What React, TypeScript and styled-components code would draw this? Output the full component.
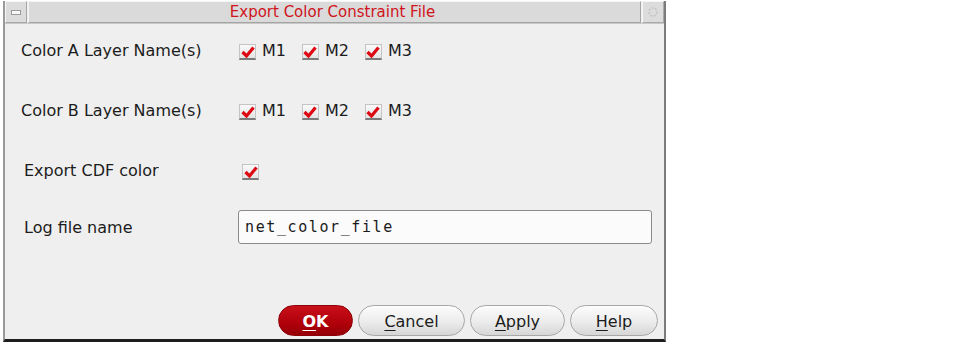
import React from 'react'
import styled, { createGlobalStyle } from 'styled-components'

const GlobalStyle = createGlobalStyle`
  html, body {
    margin: 0;
    padding: 0;
    background: #ffffff;
  }
  body {
    font-family: "DejaVu Sans", "Liberation Sans", sans-serif;
  }
`;

const Window = styled.div`
  margin: 1px 0 0 3px;
  width: 663px;
  height: 341px;
  box-sizing: border-box;
  border-left: 2px solid #9a9a9a;
  border-right: 2px solid #7c7c7c;
  border-bottom: 3px solid #1e1e1e;
  background: #efefef;
  display: flex;
  flex-direction: column;
`;

const TitleBar = styled.div`
  display: grid;
  grid-template-columns: 22px 1fr 22px;
  gap: 1px;
  height: 22px;
  border-bottom: 1px solid #c8c8c8;
`;

const TitleButton = styled.div`
  background: #dcdcdc;
  border: 1px solid #f6f6f6;
  border-right-color: #a8a8a8;
  border-bottom-color: #a8a8a8;
  display: flex;
  align-items: center;
  justify-content: center;
`;

const Title = styled.div`
  background: #dadada;
  border: 1px solid #f4f4f4;
  border-right-color: #a4a4a4;
  border-bottom-color: #a4a4a4;
  color: #d0141c;
  font-size: 15px;
  display: flex;
  align-items: center;
  justify-content: center;
  padding-right: 4px;
`;

const MinGlyph = styled.span`
  width: 8px;
  height: 3px;
  background: #f8f8f8;
  border: 1px solid #9a9a9a;
`;

const Body = styled.div`
  flex: 1;
  display: flex;
  flex-direction: column;
  padding: 0 0 0 16px;
`;

const Row = styled.div<{ $h: number; $indent?: number }>`
  height: ${p => p.$h}px;
  display: flex;
  align-items: center;
  padding-left: ${p => p.$indent || 0}px;
`;

const Label = styled.div<{ $w: number }>`
  width: ${p => p.$w}px;
  flex: none;
  font-size: 16px;
  color: #1c1c1c;
`;

const CheckGroup = styled.div`
  display: flex;
  align-items: center;
  gap: 16px;
`;

const CheckItem = styled.label`
  display: flex;
  align-items: center;
  gap: 6px;
  font-size: 16px;
  color: #1c1c1c;
`;

const Box = styled.span`
  width: 17px;
  height: 16px;
  margin-top: 4px;
  box-sizing: border-box;
  background: linear-gradient(#fafafa, #e4e4e4);
  border: 1px solid #c4c4c4;
  border-bottom: 2px solid #7a7a7a;
  display: flex;
  align-items: center;
  justify-content: center;
`;

const TextField = styled.div`
  width: 414px;
  height: 34px;
  box-sizing: border-box;
  border: 1px solid #8a8a8a;
  border-radius: 3px;
  background: #fbfbfb;
  display: flex;
  align-items: center;
  padding-left: 6px;
  font-family: "DejaVu Sans Mono", "Liberation Mono", monospace;
  font-size: 15px;
  letter-spacing: 1.6px;
  color: #1a1a1a;
`;

const ButtonBar = styled.div`
  margin-top: auto;
  display: flex;
  justify-content: flex-end;
  gap: 5px;
  padding: 0 6px 3px 0;
`;

const Button = styled.button<{ $w: number; $primary?: boolean }>`
  width: ${p => p.$w}px;
  height: 31px;
  border-radius: 16px;
  font-family: "DejaVu Sans", "Liberation Sans", sans-serif;
  font-size: 16px;
  font-weight: ${p => (p.$primary ? 'bold' : 'normal')};
  color: ${p => (p.$primary ? '#ffffff' : '#1c1c1c')};
  border: 1px solid ${p => (p.$primary ? '#8c0008' : '#a8a8a8')};
  background: ${p =>
    p.$primary
      ? 'linear-gradient(#c8101a, #b0000a 60%, #960008)'
      : 'linear-gradient(#fcfcfc, #ececec 55%, #d6d6d6)'};
  padding: 2px 0 0;
  u {
    text-decoration-thickness: 1px;
    text-underline-offset: 3px;
  }
`;

const Check = () => (
  <Box>
    <svg width="14" height="12" viewBox="0 0 14 12">
      <path d="M1.5 6 L5.5 10 L12.5 1.5" fill="none" stroke="#dd0a14" strokeWidth="3.2" strokeLinejoin="miter" />
    </svg>
  </Box>
);

const Layers = () => (
  <CheckGroup>
    {['M1', 'M2', 'M3'].map(l => (
      <CheckItem key={l}>
        <Check />
        {l}
      </CheckItem>
    ))}
  </CheckGroup>
);

const App = () => (
  <>
    <GlobalStyle />
    <Window>
      <TitleBar>
        <TitleButton><MinGlyph /></TitleButton>
        <Title>Export Color Constraint File</Title>
        <TitleButton>
          <svg width="12" height="12" viewBox="0 0 12 12">
            <circle cx="6" cy="6" r="4" fill="none" stroke="#c4c4c4" strokeWidth="1.5" strokeDasharray="2 1.4" />
          </svg>
        </TitleButton>
      </TitleBar>
      <Body>
        <Row $h={52}>
          <Label $w={218}>Color A Layer Name(s)</Label>
          <Layers />
        </Row>
        <Row $h={68}>
          <Label $w={218}>Color B Layer Name(s)</Label>
          <Layers />
        </Row>
        <Row $h={52} $indent={3}>
          <Label $w={218}>Export CDF color</Label>
          <Check />
        </Row>
        <Row $h={62} $indent={3}>
          <Label $w={214}>Log file name</Label>
          <TextField>net_color_file</TextField>
        </Row>
        <ButtonBar>
          <Button $w={75} $primary><u>O</u>K</Button>
          <Button $w={107}><u>C</u>ancel</Button>
          <Button $w={95}><u>A</u>pply</Button>
          <Button $w={88}><u>H</u>elp</Button>
        </ButtonBar>
      </Body>
    </Window>
  </>
);

export default App
